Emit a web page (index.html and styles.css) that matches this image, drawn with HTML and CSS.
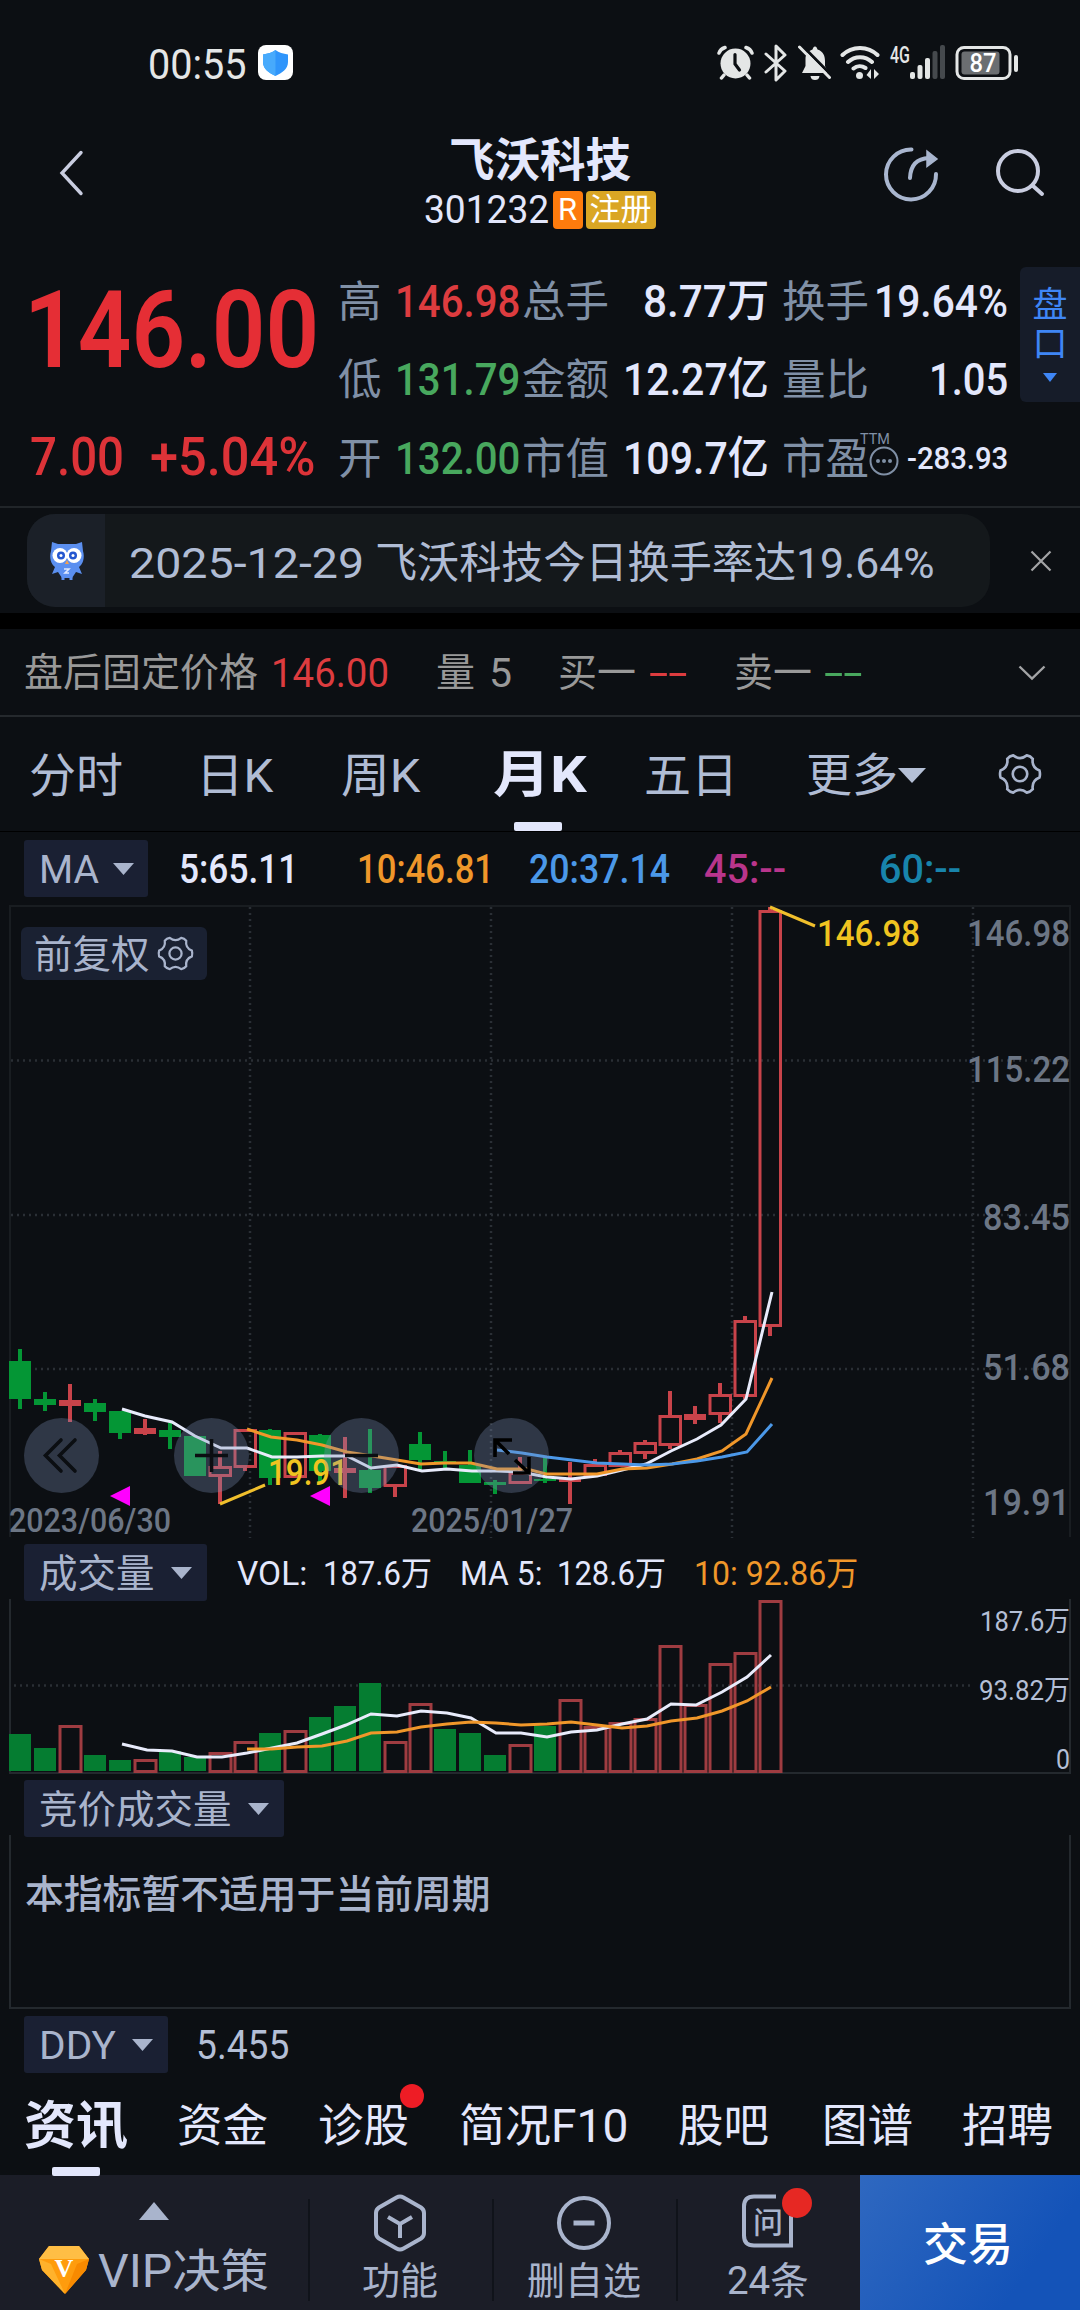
FILE: index.html
```html
<!DOCTYPE html>
<html lang="zh-Hans">
<head>
  <meta charset="UTF-8">
  <title>飞沃科技 301232</title>
  <link rel="stylesheet" href="styles.css">
</head>
<body>

<svg width="0" height="0" class="defs">
  <symbol id="gear" viewBox="0 0 40 40">
    <path d="M37.7 16.9Q38.6 20 37.7 23.1Q30.4 26 31.6 33.8Q29.5 36.3 26.2 36.9Q20 32 13.8 36.9Q10.5 36.3 8.4 33.8Q9.6 26 2.3 23.1Q1.4 20 2.3 16.9Q9.6 14 8.4 6.2Q10.5 3.7 13.8 3.1Q20 8 26.2 3.1Q29.5 3.7 31.6 6.2Q30.4 14 37.7 16.9Z"/>
    <circle cx="20" cy="20" r="6.6"/>
  </symbol>
</svg>

<div class="status">
  <span class="clock" data-w="99">00:55</span>
  <svg class="shield" width="35" height="35" viewBox="0 0 35 35">
    <rect width="35" height="35" rx="8" fill="#fff"/>
    <path d="M17.500 5C21 8 25 8.500 30 9.500V17C30 24 24 28 17.500 31C11 28 5 24 5 17V9.500C10 8.500 14 8 17.500 5Z" fill="#2f95fb"/>
    <path d="M17.500 5V31C11 28 5 24 5 17V9.500C10 8.500 14 8 17.500 5Z" fill="#47aafc"/>
  </svg>
  <div class="status-icons">
    <svg width="37" height="36" viewBox="0 0 37 36" fill="none" stroke="#e4e6e6">
      <circle cx="18.500" cy="18.500" r="15" fill="#e4e6e6" stroke="none"/>
      <path d="M2 8C3 5 5 3.500 8 2.500M35 8C34 5 32 3.500 29 2.500M7 30L4.500 33M30 30L32.500 33" stroke-width="3.500" stroke-linecap="round"/>
      <path d="M18 9.500V19L22.500 25" stroke="#0c0f13" stroke-width="3.200" stroke-linecap="round"/>
    </svg>
    <svg width="24" height="38" viewBox="0 0 24 38" fill="none" stroke="#e4e6e6" stroke-width="3" stroke-linejoin="round" stroke-linecap="round">
      <path d="M2 10L21 27L12 36V2L21 11L2 28"/>
    </svg>
    <svg width="34" height="38" viewBox="0 0 34 38">
      <path d="M17 2.500C18.500 2.500 19 4 19.500 5.500C25.500 7.500 27 12 27 17V22L30.500 29H4L7.500 22V15C7.500 10 10 7 14.500 5.500C15 4 15.500 2.500 17 2.500ZM12.500 32H21.500C21 35 19.500 36 17 36C14.500 36 13 35 12.500 32Z" fill="#e4e6e6"/>
      <path d="M4 1.500L34 32" stroke="#0c0f13" stroke-width="3"/>
      <path d="M1.500 3L31.500 33.500" stroke="#e4e6e6" stroke-width="3" stroke-linecap="round"/>
    </svg>
    <svg class="wifi" width="40" height="36" viewBox="0 0 40 36" fill="none" stroke="#e4e6e6" stroke-width="4" stroke-linecap="round">
      <path d="M2.500 10C12 .5 28 .5 37.500 10M8 17C15 10.500 25 10.500 32 17M13.500 23.500C17 20.500 22 20.500 25.500 23"/>
      <circle cx="19.500" cy="30.500" r="3.500" fill="#e4e6e6" stroke="none"/>
      <path d="M31 24V34L26.500 30ZM34 34V24L39 29Z" fill="#e4e6e6" stroke="none"/>
    </svg>
    <svg class="signal" width="56" height="36" viewBox="0 0 56 36" fill="#e4e6e6">
      <text x="0" y="18" class="t-4g" textLength="20" lengthAdjust="spacingAndGlyphs">4G</text>
      <rect x="20" y="27" width="5" height="7" rx="2"/>
      <rect x="27.500" y="20" width="5" height="14" rx="2"/>
      <rect x="35" y="13" width="5" height="21" rx="2"/>
      <rect x="42.500" y="6" width="5" height="28" rx="2" fill="#45494d"/>
      <rect x="50" y="0" width="5" height="34" rx="2" fill="#45494d"/>
    </svg>
    <svg width="64" height="36" viewBox="0 0 64 36">
      <rect x="2" y="2.500" width="53" height="31" rx="7" fill="none" stroke="#e4e6e6" stroke-width="3"/>
      <rect x="6.500" y="6.500" width="38" height="23" rx="3" fill="#6b6e71"/>
      <rect x="59" y="10" width="4" height="17" rx="2" fill="#e4e6e6"/>
      <text x="14.500" y="27" class="t-bat" textLength="27" lengthAdjust="spacingAndGlyphs">87</text>
    </svg>
  </div>
</div>

<div class="header">
  <svg class="back" width="26" height="46" viewBox="0 0 26 46"><path d="M22 2.500L3 23L22 43.500" fill="none" stroke="#c9cde0" stroke-width="3.400" stroke-linecap="round"/></svg>
  <div class="stock">
    <h1 data-w="182">飞沃科技</h1>
    <div class="code">
      <span class="num" data-w="125">301232</span>
      <span class="tag r">R</span>
      <span class="tag reg">注册</span>
    </div>
  </div>
  <svg class="share" width="56" height="56" viewBox="0 0 56 56" fill="none" stroke="#a9b6cf" stroke-width="4" stroke-linecap="round">
    <path d="M28.500 3.500A25 25 0 1 0 53 28"/>
    <path d="M27 32C27.500 19 34 12.500 46 12"/>
    <path d="M44 5L54 13L44 20.500Z" fill="#a9b6cf" stroke-width="1.500"/>
  </svg>
  <svg class="search" width="52" height="52" viewBox="0 0 52 52" fill="none" stroke="#c9cde0" stroke-width="4" stroke-linecap="round">
    <circle cx="23" cy="24" r="20"/><path d="M37.500 38.500L47 47"/>
  </svg>
</div>

<div class="quote">
  <div class="price">
    <div class="last"><span data-w="295">146.00</span></div>
    <div class="change"><span data-w="94">7.00</span><span data-w="166">+5.04%</span></div>
  </div>
  <div class="facts">
    <i>高</i><b class="up"><span data-w="125">146.98</span></b>
    <i>总手</i><b><span data-w="126">8.77万</span></b>
    <i>换手</i><b><span data-w="134">19.64%</span></b>
    <i>低</i><b class="down"><span data-w="125">131.79</span></b>
    <i>金额</i><b><span data-w="146">12.27亿</span></b>
    <i>量比</i><b><span data-w="79">1.05</span></b>
    <i>开</i><b class="down"><span data-w="125">132.00</span></b>
    <i>市值</i><b><span data-w="146">109.7亿</span></b>
    <i class="pe">市盈<svg class="ttm" width="34" height="48" viewBox="0 0 34 48">
      <text x="-5" y="13" textLength="30" lengthAdjust="spacingAndGlyphs">TTM</text>
      <circle cx="19" cy="30" r="13.500" fill="#0c0f13" stroke="#8090a6" stroke-width="2"/>
      <g fill="#8090a6"><circle cx="13" cy="30" r="2"/><circle cx="19" cy="30" r="2"/><circle cx="25" cy="30" r="2"/></g>
    </svg></i><b class="small"><span data-w="101">-283.93</span></b>
  </div>
  <div class="panel"><span>盘</span><span>口</span><svg width="14" height="9"><path d="M0 0H14L7 9Z" fill="#3f86f5"/></svg></div>
</div>

<div class="notice">
  <div class="pill">
    <div class="owl">
      <svg width="36" height="40" viewBox="0 0 36 40">
        <path d="M3 1L9 3H27L33 1L34 10C36 17 34 23 30 26L33 33L27 31L23 37H13L9 31L3 33L6 26C2 23 0 17 2 10Z" fill="#5b8ff0"/>
        <path d="M14 36V39M22 36V39" stroke="#5b8ff0" stroke-width="3"/>
        <circle cx="11" cy="14.500" r="7.500" fill="#fff"/><circle cx="25" cy="14.500" r="7.500" fill="#fff"/>
        <circle cx="12" cy="14.500" r="4" fill="#2457d0"/><circle cx="24" cy="14.500" r="4" fill="#2457d0"/>
        <circle cx="12" cy="14.500" r="1.500" fill="#fff"/><circle cx="24" cy="14.500" r="1.500" fill="#fff"/>
        <path d="M18 19L20 23H16Z" fill="#f5a04c"/>
        <path d="M15 28H20L16 32H20" stroke="#dfe9ff" stroke-width="1.600" fill="none"/>
      </svg>
    </div>
    <div class="msg">
      <span class="date-part"><span data-w="235">2025-12-29</span></span>
      <span data-w="421">飞沃科技今日换手率达</span>
      <span data-w="139">19.64%</span>
    </div>
  </div>
  <svg width="22" height="22" viewBox="0 0 22 22"><path d="M1.500 1.500L20.500 20.500M20.500 1.500L1.500 20.500" stroke="#a3a4a6" stroke-width="2.200"/></svg>
</div>

<div class="after">
  <span>盘后固定价格</span>
  <span class="num up"><span data-w="118">146.00</span></span>
  <span>量</span><span class="num">5</span>
  <span>买一</span><span class="num up"><span data-w="39">--</span></span>
  <span>卖一</span><span class="num down"><span data-w="39">--</span></span>
  <svg width="28" height="16" viewBox="0 0 28 16"><path d="M1.500 1.500L14 13.500L26.500 1.500" fill="none" stroke="#a3a4a6" stroke-width="2.400"/></svg>
</div>

<div class="periods">
  <span>分时</span>
  <span><span data-w="78">日K</span></span>
  <span><span data-w="80">周K</span></span>
  <span class="on"><span data-w="94">月K</span></span>
  <span>五日</span>
  <span class="more">更多<svg width="28" height="15"><path d="M0 0H28L14 15Z" fill="#b5c0d6"/></svg></span>
  <svg class="gear" width="44" height="44"><use href="#gear"/></svg>
</div>

<div class="ma">
  <div class="drop"><span data-w="60">MA</span><svg width="21" height="12"><path d="M0 0H21L10.500 12Z"/></svg></div>
  <span><span data-w="119">5:65.11</span></span>
  <span class="ma10"><span data-w="137">10:46.81</span></span>
  <span class="ma20"><span data-w="141">20:37.14</span></span>
  <span class="ma45"><span data-w="82">45:--</span></span>
  <span class="ma60"><span data-w="82">60:--</span></span>
</div>

<div class="kline">
  <svg id="kline" width="1080" height="635" viewBox="0 905 1080 635"></svg>
  <div class="adjust"><span>前复权</span><svg width="37" height="37"><use href="#gear"/></svg></div>
</div>

<div class="vol-head">
  <div class="drop"><span>成交量</span><svg width="21" height="12"><path d="M0 0H21L10.500 12Z"/></svg></div>
  <span><span data-w="70">VOL:</span></span>
  <span><span data-w="109">187.6万</span></span>
  <span><span data-w="82">MA 5:</span></span>
  <span><span data-w="109">128.6万</span></span>
  <span class="ma10"><span data-w="164">10: 92.86万</span></span>
</div>
<svg id="volume" width="1080" height="179" viewBox="0 1597 1080 179"></svg>

<div class="auction">
  <div class="drop"><span>竞价成交量</span><svg width="21" height="12"><path d="M0 0H21L10.500 12Z"/></svg></div>
  <div class="empty">本指标暂不适用于当前周期</div>
</div>

<div class="ddy">
  <div class="drop"><span data-w="77">DDY</span><svg width="21" height="12"><path d="M0 0H21L10.500 12Z"/></svg></div>
  <span class="num" data-w="93">5.455</span>
</div>

<div class="news">
  <span class="on">资讯</span>
  <span>资金</span>
  <span class="dot">诊股</span>
  <span><span data-w="169">简况F10</span></span>
  <span>股吧</span>
  <span>图谱</span>
  <span>招聘</span>
</div>

<div class="toolbar">
  <div class="vip">
    <svg width="30" height="18"><path d="M15 0L30 18H0Z" fill="#a9b4cc"/></svg>
    <div class="vip-label">
      <svg width="50" height="48" viewBox="0 0 50 48">
        <path d="M10 0H40L50 13L47 24L26 48L3 24L0 13Z" fill="#ff9c0d"/>
        <path d="M10 0H40L50 13H0Z" fill="#ffbe45"/>
        <path d="M0 13L12 18L26 48L3 24Z" fill="#ffb22c"/>
        <path d="M50 13L38 18L26 48L47 24Z" fill="#f88a00"/>
        <text x="25" y="31" text-anchor="middle">V</text>
      </svg>
      <span data-w="171">VIP决策</span>
    </div>
  </div>
  <div class="tool">
    <svg width="56" height="58" viewBox="0 0 56 58"><path d="M24.500 3.500Q28 1.500 31.500 3.500L49 13.500Q52 15.500 52 19V39Q52 42.500 49 44.500L31.500 54.500Q28 56.500 24.500 54.500L7 44.500Q4 42.500 4 39V19Q4 15.500 7 13.500ZM16 23L28 30L40 23M28 30V44"/></svg>
    <span>功能</span>
  </div>
  <div class="tool">
    <svg width="56" height="58" viewBox="0 0 56 58"><circle cx="28" cy="29" r="25"/><path d="M17.500 29H38.500" stroke-width="5"/></svg>
    <span>删自选</span>
  </div>
  <div class="tool">
    <svg width="56" height="58" viewBox="0 0 56 58"><path d="M36 2.500H14Q4 2.500 4 12.500V41.500Q4 51.500 14 51.500H51V22"/><text x="28" y="39" text-anchor="middle">问</text><circle class="red" cx="57" cy="9" r="15"/></svg>
    <span><span data-w="82">24条</span></span>
  </div>
  <div class="trade">交易</div>
</div>

<script>
  // squeeze text to the width given in data-w
  document.querySelectorAll('[data-w]').forEach(el => {
    const w = parseFloat(el.dataset.w);
    const natural = el.offsetWidth;
    el.style.transform = `scaleX(${w / natural})`;
    el.style.marginRight = `${w - natural}px`;
  });

  const RED = '#c8434a';
  const GREEN = '#049635';

  // [up, high, body top, body bottom, low]
  const candles = [
    [0, 1349, 1361, 1399, 1409], [0, 1392, 1399, 1405, 1411], [1, 1384, 1400, 1406, 1422],
    [0, 1399, 1403, 1412, 1421], [0, 1411, 1411, 1433, 1439], [1, 1419, 1428, 1434, 1435],
    [0, 1423, 1430, 1437, 1449], [0, 1436, 1436, 1476, 1476], [1, 1451, 1466, 1477, 1504],
    [1, 1429, 1429, 1468, 1471], [0, 1429, 1430, 1478, 1485], [1, 1432, 1432, 1478, 1478],
    [0, 1434, 1435, 1471, 1482], [1, 1437, 1468, 1473, 1498], [0, 1429, 1470, 1488, 1493],
    [1, 1465, 1465, 1487, 1497], [0, 1432, 1444, 1460, 1470], [0, 1451, 1461, 1463, 1470],
    [0, 1450, 1465, 1483, 1483], [0, 1480, 1482, 1485, 1494], [1, 1457, 1472, 1484, 1484],
    [0, 1457, 1479, 1481, 1483], [1, 1462, 1478, 1482, 1504], [1, 1459, 1464, 1476, 1476],
    [1, 1450, 1452, 1467, 1467], [1, 1440, 1442, 1454, 1459], [1, 1391, 1415, 1446, 1449],
    [1, 1406, 1414, 1420, 1424], [1, 1383, 1394, 1415, 1423], [1, 1316, 1320, 1397, 1399],
    [1, 907, 910, 1327, 1336]
  ];
  const ma5 = '122,1409 145,1416 172,1422 195,1436 221,1448 247,1448 272,1457 297,1457 322,1456 347,1456 371,1468 397,1465 422,1471 447,1469 472,1471 497,1471 520,1472 547,1477 571,1479 597,1476 622,1470 646,1464 671,1451 697,1439 721,1425 746,1399 772,1292';
  const ma10 = '247,1429 271,1437 297,1440 322,1445 347,1452 385,1458 421,1464 445,1463 471,1463 497,1469 527,1469 546,1474 597,1474 622,1469 647,1468 672,1464 697,1459 722,1451 746,1434 772,1378';
  const ma20 = '497,1450 522,1453 547,1457 572,1460 597,1463 622,1464 647,1465 672,1464 697,1461 722,1457 747,1452 772,1424';

  // bar tops
  const vols = [1734, 1748, 1725, 1755, 1760, 1759, 1751, 1757, 1752, 1741, 1733, 1730, 1717, 1706, 1683, 1741,
    1703, 1729, 1733, 1755, 1744, 1726, 1699, 1726, 1722, 1718, 1645, 1704, 1663, 1652, 1600];
  const volUp = [2, 5, 8, 9, 11, 15, 16, 20, 22, 23, 24, 25, 26, 27, 28, 29, 30];
  const vma5 = '122,1744 147,1750 172,1751 197,1757 222,1757 247,1753 272,1748 297,1743 322,1734 346,1725 371,1714 397,1716 421,1711 447,1713 471,1718 496,1733 521,1733 547,1737 571,1732 597,1730 622,1724 647,1719 671,1704 696,1705 722,1692 747,1677 771,1655';
  const vma10 = '247,1749 272,1749 297,1747 322,1746 347,1741 371,1733 397,1732 421,1727 447,1724 471,1722 496,1723 521,1725 547,1724 571,1722 597,1725 622,1728 647,1726 671,1721 697,1718 722,1711 747,1701 771,1687';

  const poly = (pts, color) => `<polyline points="${pts}" fill="none" stroke="${color}" stroke-width="3"/>`;
  const label = (x, y, w, cls, text) =>
    `<text x="${x}" y="${y}" class="${cls}" textLength="${w}" lengthAdjust="spacingAndGlyphs">${text}</text>`;

  function drawCandle([up, high, top, bottom, low], i) {
    const x = 20 + 25 * i;
    const color = up ? RED : GREEN;
    if (up && bottom - top > 7) {
      return `<path d="M${x} ${high}V${top}M${x} ${bottom}V${low}" stroke="${color}" stroke-width="4"/>
        <rect x="${x - 10}" y="${top + 1.5}" width="20.5" height="${bottom - top - 3}" fill="none" stroke="${color}" stroke-width="3"/>`;
    }
    return `<path d="M${x} ${high}V${low}" stroke="${color}" stroke-width="4"/>
      <rect x="${x - 11}" y="${top}" width="22" height="${bottom - top}" fill="${color}"/>`;
  }

  const k = [];
  [250, 491, 732, 973].forEach(x => k.push(`<path class="grid" d="M${x} 907V1538"/>`));
  [1060.5, 1215, 1369].forEach(y => k.push(`<path class="grid" d="M11 ${y}H1069"/>`));
  k.push('<path class="frame dim" d="M10 1537V906H1070V1537"/>');
  candles.forEach((c, i) => k.push(drawCandle(c, i)));
  k.push(poly(ma5, '#e8ebfb'), poly(ma10, '#f0972a'), poly(ma20, '#4b98e8'));
  k.push('<path d="M770 907L815 926M220 1504L265 1485" stroke="#f0bf2c" stroke-width="3"/>');
  k.push(label(817, 946, 103, 'hl', '146.98'), label(268, 1485, 80, 'hl', '19.91'));
  k.push('<path d="M110 1496L130 1486V1506ZM310 1496L330 1486V1506Z" fill="#ff00ff"/>');
  [61.5, 211.5, 361.5, 511.5].forEach(x => k.push(`<circle cx="${x}" cy="1455.5" r="37.5" fill="rgba(125,145,183,.31)"/>`));
  k.push(`<g fill="none" stroke="#0b0e12" stroke-width="3.6">
    <path d="M61 1440L45.500 1455.500L61 1471M75 1440L59.500 1455.500L75 1471" stroke-linecap="round"/>
    <path d="M195 1455.500H228M211.500 1439V1472M345 1455.500H378"/>
    <path d="M512 1440H495V1457M496 1441L509 1454M513 1473H529V1457M528 1472L515 1460" stroke="#000"/>
  </g>`);
  k.push(label(967, 946, 103, 'axis', '146.98'), label(967, 1082, 103, 'axis', '115.22'), label(983, 1230, 87, 'axis', '83.45'),
    label(983, 1380, 87, 'axis', '51.68'), label(983, 1515, 87, 'axis', '19.91'));
  k.push(label(9, 1532, 162, 'date', '2023/06/30'), label(411, 1532, 162, 'date', '2025/01/27'));
  document.getElementById('kline').innerHTML = k.join('');

  const v = ['<path class="grid" d="M14 1685.500H972"/>', '<path class="frame" d="M10 1599V1773H1070V1599"/>'];
  vols.forEach((top, i) => {
    const x = 9 + 25 * i;
    v.push(volUp.includes(i)
      ? `<rect x="${x + 1}" y="${top + 1.5}" width="21" height="${1771 - top - 1}" fill="none" stroke="#9f3c41" stroke-width="3"/>`
      : `<rect x="${x}" y="${top}" width="22" height="${1771 - top}" fill="#057d31"/>`);
  });
  v.push(poly(vma5, '#e8ebfb'), poly(vma10, '#f0972a'));
  v.push(label(980, 1631, 90, 'vaxis', '187.6万'), label(979, 1700, 91, 'vaxis', '93.82万'), label(1056, 1769, 14, 'vaxis', '0'));
  document.getElementById('volume').innerHTML = v.join('');
</script>
</body>
</html>
```
FILE: styles.css
```css
* {
  box-sizing: border-box;
}

body {
  margin: 0;
  width: 1080px;
  height: 2310px;
  overflow: hidden;
  background: #0c0f13;
  color: #e3e7fc;
  font-family: Roboto, "Noto Sans CJK SC", sans-serif;
  line-height: 1;
}

svg {
  display: block;
  flex: none;
}

.defs {
  position: absolute;
}

[data-w] {
  display: inline-block;
  white-space: nowrap;
  transform-origin: 0 50%;
}

.up {
  color: #dd3c3f;
}

.down {
  color: #48a85e;
}

/* status bar */
.status {
  display: flex;
  align-items: center;
  height: 125px;
  padding-left: 148px;
}

.clock {
  font-size: 42px;
  color: #e4e6e6;
  padding-top: 4px;
}

.shield {
  margin-left: 11px;
}

.status-icons {
  display: flex;
  align-items: center;
  margin-left: 424px;
  gap: 10px;
}

.wifi {
  margin-left: -2px;
}

.signal {
  overflow: visible;
  margin-right: -1px;
}

.t-4g {
  font-size: 23px;
  font-weight: 500;
}

.t-bat {
  font-size: 26px;
  font-weight: 500;
  fill: #fff;
}

/* header */
.header {
  display: flex;
  height: 136px;
  padding-left: 59px;
}

.back {
  margin-top: 25px;
}

.stock {
  width: 240px;
  margin-left: 335px;
  display: flex;
  flex-direction: column;
  align-items: center;
}

h1 {
  margin: 12px 0 0;
  font-size: 46px;
  font-weight: 700;
}

.code {
  display: flex;
  align-items: center;
  gap: 3px;
  margin-top: 8px;
  font-size: 38px;
}

.tag {
  height: 38px;
  border-radius: 4px;
  font-size: 31px;
  line-height: 38px;
  text-align: center;
  color: #fff;
}

.tag.r {
  width: 30px;
  background: #fd7b0d;
}

.tag.reg {
  width: 70px;
  background: #daa624;
}

.share {
  margin: 21px 0 0 223px;
}

.search {
  margin: 22px 0 0 56px;
}

/* quote */
.quote {
  display: flex;
  height: 247px;
  border-bottom: 2px solid #212529;
}

.price {
  width: 338px;
  padding-left: 24px;
  color: #e52e35;
  font-weight: 500;
}

.last {
  height: 138px;
  font-size: 108px;
  font-weight: 600;
  line-height: 139px;
}

.change {
  display: flex;
  gap: 26px;
  padding: 32px 0 0 6px;
  font-size: 53px;
  color: #dd3338;
}

.facts {
  display: grid;
  grid-template-columns: 60px 122px 90px 159px 100px 139px;
  grid-template-rows: repeat(3, 78.5px);
  align-items: center;
  width: 670px;
  font-size: 45px;
}

.facts i {
  padding-top: 4px;
  font-style: normal;
  font-size: 43.5px;
  color: #8090a6;
  white-space: nowrap;
}

.facts i:nth-child(4n + 3) {
  padding-left: 0;
}

.facts i:nth-child(6n + 3) {
  padding-left: 2px;
}

.facts i:nth-child(6n + 5) {
  padding-left: 13px;
}

.facts b {
  padding-top: 2px;
  font-weight: 500;
  display: flex;
  justify-content: flex-end;
}

.facts .small {
  font-size: 31px;
}

.facts .pe {
  display: flex;
}

.ttm {
  overflow: visible;
  margin: -7px 0 0 -4px;
  font-size: 15px;
  fill: #8090a6;
}

.panel {
  display: flex;
  flex-direction: column;
  align-items: center;
  width: 60px;
  height: 135px;
  margin: 6px 0 0 12px;
  padding-top: 21px;
  gap: 4px;
  border-radius: 6px 0 0 6px;
  background: #161c29;
  color: #3f86f5;
  font-size: 35px;
}

.panel svg {
  margin-top: 7px;
}

/* notice */
.notice {
  display: flex;
  align-items: center;
  height: 105px;
  padding-left: 27px;
  gap: 40px;
}

.pill {
  display: flex;
  align-items: center;
  width: 963px;
  height: 93px;
  border-radius: 28px;
  overflow: hidden;
  background: #14181b;
  color: #b0bcd4;
}

.owl {
  display: flex;
  align-items: center;
  width: 78px;
  height: 93px;
  padding-left: 22px;
  background: #1b2028;
}

.msg {
  display: flex;
  margin-left: 24px;
  padding-top: 5px;
  font-size: 43px;
}

.date-part {
  width: 246px;
}

/* after-hours row */
.after {
  display: grid;
  grid-template-columns: 247px 165px 53px 69px 91px 85px 90px 194px 28px;
  align-items: center;
  height: 104px;
  padding-left: 24px;
  padding-top: 2px;
  border-top: 16px solid #000;
  border-bottom: 2px solid #25292d;
  font-size: 39px;
  color: #999;
}

.after .num {
  font-size: 41px;
}

.after .up {
  color: #dd3c3f;
}

.after .down {
  color: #48a85e;
}

/* period tabs */
.periods {
  display: grid;
  grid-template-columns: 167px 145px 152px 151px 162px 192px 44px;
  align-items: center;
  height: 115px;
  padding-left: 29px;
  border-bottom: 1px solid #000;
  font-size: 47px;
  color: #b0bcd4;
}

.periods > span {
  padding-top: 2px;
}

.periods .on {
  position: relative;
  color: #e3e7fc;
  font-size: 50px;
  font-weight: 700;
}

.periods .on::after {
  content: "";
  position: absolute;
  left: 21px;
  bottom: -31px;
  width: 48px;
  height: 9px;
  border-radius: 2px;
  background: #e3e7fc;
}

.more {
  display: flex;
  align-items: center;
  font-size: 46px;
}

.gear,
.adjust svg {
  fill: none;
  stroke: #a9b4cc;
  stroke-width: 2.4;
}

/* indicator headers */
.drop {
  justify-self: start;
  display: inline-flex;
  align-items: center;
  height: 57px;
  padding: 0 15px 0 15px;
  gap: 16px;
  border-radius: 3px;
  background: #1a2033;
  color: #a9b4cc;
  font-size: 38.5px;
  font-weight: 400;
}

.drop span {
  padding-top: 3px;
}

.drop svg {
  fill: #a9b4cc;
}

.ma {
  display: grid;
  grid-template-columns: 155px 178px 172px 175px 175px 120px;
  align-items: center;
  height: 73px;
  padding-left: 24px;
  font-size: 40px;
  font-weight: 500;
}

.ma > span {
  padding-top: 3px;
}

.ma10 {
  color: #f0972a;
}

.ma20 {
  color: #4b98e8;
}

.ma45 {
  color: #b9358c;
}

.ma60 {
  color: #1884ab;
}

.ma .drop {
  padding-right: 14px;
  gap: 14px;
}

/* charts */
.kline {
  position: relative;
  height: 635px;
}

.adjust {
  position: absolute;
  left: 21px;
  top: 22px;
  display: flex;
  align-items: center;
  gap: 7px;
  width: 186px;
  height: 53px;
  padding-left: 13px;
  border-radius: 6px;
  background: #1a2132;
  color: #a9b4cc;
  font-size: 38.5px;
}

.adjust span {
  padding-top: 4px;
}

.grid {
  fill: none;
  stroke: #2a2f35;
  stroke-width: 2.5;
  stroke-dasharray: 2 4;
}

.frame {
  fill: none;
  stroke: #24292e;
  stroke-width: 2;
}

.frame.dim {
  stroke: #191d21;
}

.hl,
.axis {
  font-size: 37px;
  font-weight: 500;
}

.hl {
  fill: #f0c420;
}

.axis,
.date {
  fill: #6c7685;
}

.date {
  font-size: 34px;
  font-weight: 500;
}

.vaxis {
  font-size: 28px;
  fill: #b4bfd6;
}

.vol-head {
  display: grid;
  grid-template-columns: 213px 86px 137px 97px 137px 170px;
  align-items: center;
  height: 57px;
  margin-top: 4px;
  margin-bottom: -4px;
  padding-left: 24px;
  font-size: 33px;
}

.vol-head > span {
  padding-top: 1px;
}

.auction {
  height: 236px;
  padding: 4px 0 0 24px;
}

.empty {
  margin-left: -15px;
  width: 1062px;
  height: 174px;
  margin-top: -2px;
  padding: 41px 0 0 14px;
  border: 2px solid #24292e;
  border-top: 0;
  color: #a9b4cc;
  font-size: 38.8px;
  font-weight: 500;
}

.ddy {
  display: flex;
  align-items: center;
  height: 57px;
  margin-top: 4px;
  padding-left: 24px;
  gap: 28px;
  color: #b4bfd6;
  font-size: 40px;
}

.ddy .num {
  padding-top: 2px;
}

/* news tabs */
.news {
  display: grid;
  grid-template-columns: 153px 141px 141px 219px 144px 140px 100px;
  align-items: center;
  height: 102px;
  padding-left: 24px;
  padding-top: 5px;
  font-size: 45.5px;
}

.news span {
  position: relative;
  white-space: nowrap;
}

.news .on {
  font-size: 52px;
  font-weight: 700;
}

.news .on::after {
  content: "";
  position: absolute;
  left: 28px;
  bottom: -23px;
  width: 48px;
  height: 9px;
  border-radius: 2px;
  background: #e3e7fc;
}

.dot::after {
  content: "";
  position: absolute;
  left: 82px;
  top: -20px;
  width: 24px;
  height: 24px;
  border-radius: 50%;
  background: #ee1c25;
}

/* bottom bar */
.toolbar {
  display: grid;
  grid-template-columns: 308px 184px 184px 184px 220px;
  height: 135px;
  background: #1b1d27;
  color: #a9b4cc;
}

.vip {
  padding: 27px 0 0 39px;
}

.vip > svg {
  margin-left: 100px;
}

.vip-label {
  display: flex;
  align-items: center;
  gap: 9px;
  margin-top: 25px;
  font-size: 46px;
}

.vip-label span {
  padding-top: 3px;
}

.vip-label text {
  fill: #fff;
  font: 700 26px "Liberation Serif", serif;
}

.tool {
  display: flex;
  flex-direction: column;
  align-items: center;
  padding-top: 19px;
  gap: 10px;
  background: linear-gradient(#10131a, #10131a) 0 24px / 2px 102px no-repeat;
  font-size: 38px;
}

.tool svg {
  overflow: visible;
  fill: none;
  stroke: #a9b4cc;
  stroke-width: 4;
}

.tool text {
  fill: #a9b4cc;
  stroke: none;
  font-size: 30px;
  font-weight: 500;
}

.tool .red {
  fill: #e62823;
  stroke: none;
}

.trade {
  display: flex;
  align-items: center;
  justify-content: center;
  padding: 5px 4px 0 0;
  background: linear-gradient(125deg, #2f68c0, #1453b8 75%);
  color: #fff;
  font-size: 45px;
  font-weight: 500;
}
```
